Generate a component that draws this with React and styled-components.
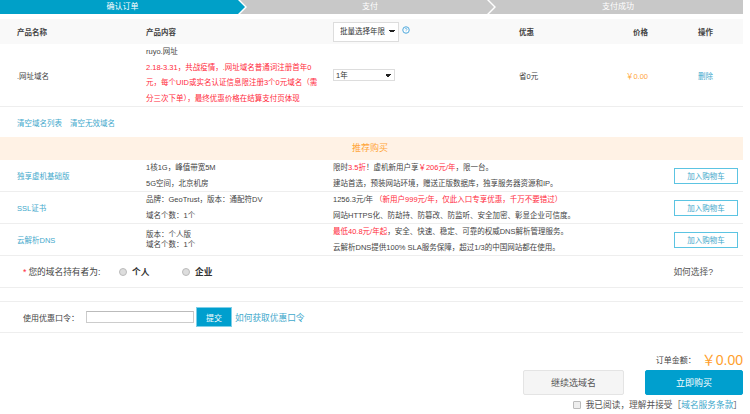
import React from 'react';
import styled, { createGlobalStyle } from 'styled-components';

const Global = createGlobalStyle`
    html, body {
        margin: 0;
        padding: 0;
        background: #fff;
    }
    body {
        width: 750px;
        height: 414px;
        overflow: hidden;
        font-family: "Liberation Sans", "Noto Sans CJK SC", sans-serif;
        font-size: 7.5px;
        color: #444;
    }
`;
const Page = styled.div`
    width: 743px;
`;
const Steps = styled.div`
    display: flex;
    height: 14px;
`;
const Step = styled.div`
    flex: 0 0 ${(p) => p.$width}px;
    margin-left: ${(p) => (p.$first ? 0 : -5)}px;
    height: 14px;
    line-height: 14px;
    text-align: center;
    font-size: 8px;
    color: #fff;
    background: ${(p) => (p.$active ? '#00a0c8' : '#c8c8c8')};
    clip-path: ${(p) => (p.$clip)};
    padding-left: ${(p) => p.$pad || 0}px;
    box-sizing: border-box;
`;
const tableColumns = '146px 187px 186px 100px 29px 1fr';
const HeadRow = styled.div`
    display: grid;
    grid-template-columns: ${tableColumns};
    align-items: center;
    height: 25px;
    margin-top: 5px;
    background: #f9f9f9;
    font-weight: bold;
    color: #444;
`;
const Cell = styled.div`
    padding-left: ${(p) => p.$pad || 0}px;
    text-align: ${(p) => p.$align || 'left'};
    color: ${(p) => p.$color || 'inherit'};
    white-space: nowrap;
`;
const NativeSelect = styled.select`
    display: block;
    width: ${(p) => p.$width}px;
    height: ${(p) => p.$height}px;
    font-family: inherit;
    font-size: 7.5px;
    font-weight: normal;
    color: #333;
    background: #fff;
    border: 1px solid #ddd;
    padding: 0 0 0 ${(p) => p.$inset}px;
    border-radius: 0;
    appearance: none;
    background-image: linear-gradient(45deg, transparent 50%, #222 50%), linear-gradient(-45deg, transparent 50%, #222 50%);
    background-size: 3px 3px, 3px 3px;
    background-position: right 6px center, right 3px center;
    background-repeat: no-repeat;
`;
const BatchWrap = styled.div`
    display: flex;
    align-items: flex-start;
    gap: 3px;
`;
const HelpIcon = styled.svg`
    width: 8px;
    height: 8px;
    margin-top: 4px;
`;
const OrderRow = styled.div`
    display: grid;
    grid-template-columns: ${tableColumns};
    align-items: center;
    height: 62px;
    border-bottom: 1px solid #eee;
`;
const Content = styled.div`
    line-height: 15.5px;
    white-space: nowrap;
`;
const Red = styled.span`
    color: #ff2a3c;
`;
const Link = styled.a`
    color: #3fa9cc;
    text-decoration: none;
`;
const ClearRow = styled.div`
    display: flex;
    gap: 8px;
    align-items: center;
    height: 30px;
    padding-left: 17px;
`;
const Banner = styled.div`
    height: 23px;
    line-height: 23px;
    background: #fff2e5;
    color: #ffa63a;
    font-size: 9px;
    text-align: center;
    padding-right: 3px;
`;
const RecRow = styled.div`
    display: grid;
    grid-template-columns: 146px 187px 1fr 69px;
    align-items: center;
    height: 31px;
    border-bottom: 1px solid #eee;
    padding-right: 5px;
`;
const RecLines = styled.div`
    line-height: ${(p) => p.$line || 15.5}px;
`;
const CartButton = styled.button`
    justify-self: end;
    width: 64px;
    height: 16px;
    padding: 0;
    background: #fff;
    border: 1px solid #5cc4e2;
    color: #3fa9cc;
    font-family: inherit;
    font-size: 7.5px;
`;
const HolderRow = styled.div`
    display: flex;
    align-items: center;
    height: 31px;
    padding-left: 23px;
    border-bottom: 1px solid #eee;
    font-size: 8.7px;
`;
const HolderLabel = styled.span`
    width: 96px;
`;
const Star = styled.span`
    color: #ff2a3c;
    margin-right: 2px;
`;
const Option = styled.label`
    display: flex;
    align-items: center;
    gap: 5px;
    width: 63px;
    font-weight: bold;
    color: #333;
`;
const Radio = styled.span`
    width: 6px;
    height: 6px;
    border-radius: 50%;
    background: #ddd;
    border: 1px solid #bbb;
`;
const HowTo = styled.span`
    margin-left: auto;
    margin-right: 30px;
    color: #555;
`;
const CouponRow = styled.div`
    display: flex;
    align-items: center;
    height: 30px;
    margin-top: 13px;
    padding-left: 23px;
    border-top: 1px solid #eee;
    border-bottom: 1px solid #eee;
    font-size: 8px;
`;
const CouponInput = styled.input`
    width: 106px;
    height: 10px;
    margin-left: 7px;
    padding: 0;
    border: 1px solid #ccc;
    border-top-color: #bbb;
    outline: none;
`;
const SubmitButton = styled.button`
    width: 36px;
    height: 20px;
    margin: 0 3px 0 2px;
    padding: 0;
    background: #009fce;
    border: 1px solid #7fcfe8;
    color: #fff;
    font-family: inherit;
    font-size: 8px;
`;
const CouponLink = styled(Link)`
    font-size: 8.7px;
`;
const Footer = styled.div`
    display: flex;
    flex-direction: column;
    align-items: flex-end;
`;
const Total = styled.div`
    display: flex;
    align-items: center;
    gap: 6px;
    margin-top: 17px;
    height: 18px;
    font-size: 8px;
    white-space: nowrap;
`;
const Amount = styled.span`
    color: #ff9f2e;
    font-size: 14px;
`;
const Actions = styled.div`
    display: flex;
    gap: 21px;
    margin-top: 2px;
`;
const BigButton = styled.button`
    width: ${(p) => p.$width}px;
    height: 25px;
    padding: 0;
    border-radius: 2px;
    font-family: inherit;
    font-size: 9px;
    color: ${(p) => (p.$primary ? '#fff' : '#555')};
    background: ${(p) => (p.$primary ? '#009fce' : '#f5f5f5')};
    border: 1px solid ${(p) => (p.$primary ? '#009fce' : '#e4e4e4')};
`;
const Agree = styled.div`
    display: flex;
    align-items: center;
    gap: 5px;
    margin-top: 3px;
    padding-right: 1px;
    font-size: 8.7px;
    color: #555;
    white-space: nowrap;
`;
const Check = styled.span`
    width: 6px;
    height: 6px;
    background: #eee;
    border: 1px solid #bbb;
    border-radius: 1px;
`;

const recommend = [
    {
        name: '独享虚机基础版',
        spec: ['1核1G，峰值带宽5M', '5G空间，北京机房'],
        desc: [
            <>限时<Red>3.5折</Red>！虚机新用户享<Red>￥206元/年</Red>，限一台。</>,
            '建站首选，预装网站环境，赠送正版数据库，独享服务器资源和IP。',
        ],
    },
    {
        name: 'SSL证书',
        spec: ['品牌：GeoTrust，版本：通配符DV', '域名个数：1个'],
        desc: [
            <>1256.3元/年 <Red>（新用户999元/年，仅此入口专享优惠，千万不要错过）</Red></>,
            '网站HTTPS化、防劫持、防篡改、防监听、安全加密、彰显企业可信度。',
        ],
    },
    {
        name: '云解析DNS',
        spec: ['版本：个人版', '域名个数：1个'],
        specLine: 10,
        desc: [
            <><Red>最低40.8元/年起</Red>，安全、快速、稳定、可靠的权威DNS解析管理服务。</>,
            '云解析DNS提供100% SLA服务保障，超过1/3的中国网站都在使用。',
        ],
    },
];

const tip = 'calc(100% - 7px) 0, 100% 50%, calc(100% - 7px) 100%';

export default function App() {
    return (
        <Page>
            <Global />
            <Steps>
                <Step $first $active $width={245} $clip={`polygon(0 0, ${tip}, 0 100%)`}>确认订单</Step>
                <Step $width={254} $pad={6} $clip={`polygon(0 0, ${tip}, 0 100%, 7px 50%)`}>支付</Step>
                <Step $width={254} $pad={4} $clip="polygon(0 0, 100% 0, 100% 100%, 0 100%, 7px 50%)">支付成功</Step>
            </Steps>
            <HeadRow>
                <Cell $pad={17}>产品名称</Cell>
                <Cell>产品内容</Cell>
                <BatchWrap>
                    <NativeSelect $width={66} $height={20} $inset={6}>
                        <option>批量选择年限</option>
                    </NativeSelect>
                    <HelpIcon viewBox="0 0 16 16">
                        <circle cx="8" cy="8" r="6.5" fill="#fff" stroke="#4fa8dc" strokeWidth="2" />
                        <path d="M6 6.5a2 2 0 1 1 3 1.7c-.7.4-1 .8-1 1.6M8 11.5v1" fill="none" stroke="#4fa8dc" strokeWidth="1.5" />
                    </HelpIcon>
                </BatchWrap>
                <Cell>优惠</Cell>
                <Cell $align="right">价格</Cell>
                <Cell $pad={50}>操作</Cell>
            </HeadRow>
            <OrderRow>
                <Cell $pad={17}>.网址域名</Cell>
                <Content>
                    ruyo.网址<br />
                    <Red>
                        2.18-3.31，共战疫情，.网址域名普通词注册首年0<br />
                        元，每个UID或实名认证信息限注册3个0元域名（需<br />
                        分三次下单），最终优惠价格在结算支付页体现
                    </Red>
                </Content>
                <div>
                    <NativeSelect $width={62} $height={12} $inset={2}>
                        <option>1年</option>
                    </NativeSelect>
                </div>
                <Cell>省0元</Cell>
                <Cell $align="right" $color="#ffa63a">￥0.00</Cell>
                <Cell $pad={50}><Link>删除</Link></Cell>
            </OrderRow>
            <ClearRow>
                <Link>清空域名列表</Link>
                <Link>清空无效域名</Link>
            </ClearRow>
            <Banner>推荐购买</Banner>
            {recommend.map((item) => (
                <RecRow key={item.name}>
                    <Cell $pad={17}><Link>{item.name}</Link></Cell>
                    <RecLines $line={item.specLine}>
                        {item.spec.map((line) => <div key={line}>{line}</div>)}
                    </RecLines>
                    <RecLines>
                        {item.desc.map((line, index) => <div key={index}>{line}</div>)}
                    </RecLines>
                    <CartButton>加入购物车</CartButton>
                </RecRow>
            ))}
            <HolderRow>
                <HolderLabel><Star>*</Star>您的域名持有者为:</HolderLabel>
                <Option><Radio />个人</Option>
                <Option><Radio />企业</Option>
                <HowTo>如何选择?</HowTo>
            </HolderRow>
            <CouponRow>
                使用优惠口令：
                <CouponInput />
                <SubmitButton>提交</SubmitButton>
                <CouponLink>如何获取优惠口令</CouponLink>
            </CouponRow>
            <Footer>
                <Total>订单金额： <Amount>￥0.00</Amount></Total>
                <Actions>
                    <BigButton $width={101}>继续选域名</BigButton>
                    <BigButton $width={98} $primary>立即购买</BigButton>
                </Actions>
                <Agree><Check /><span>我已阅读，理解并接受［<Link>域名服务条款</Link>］</span></Agree>
            </Footer>
        </Page>
    );
}
